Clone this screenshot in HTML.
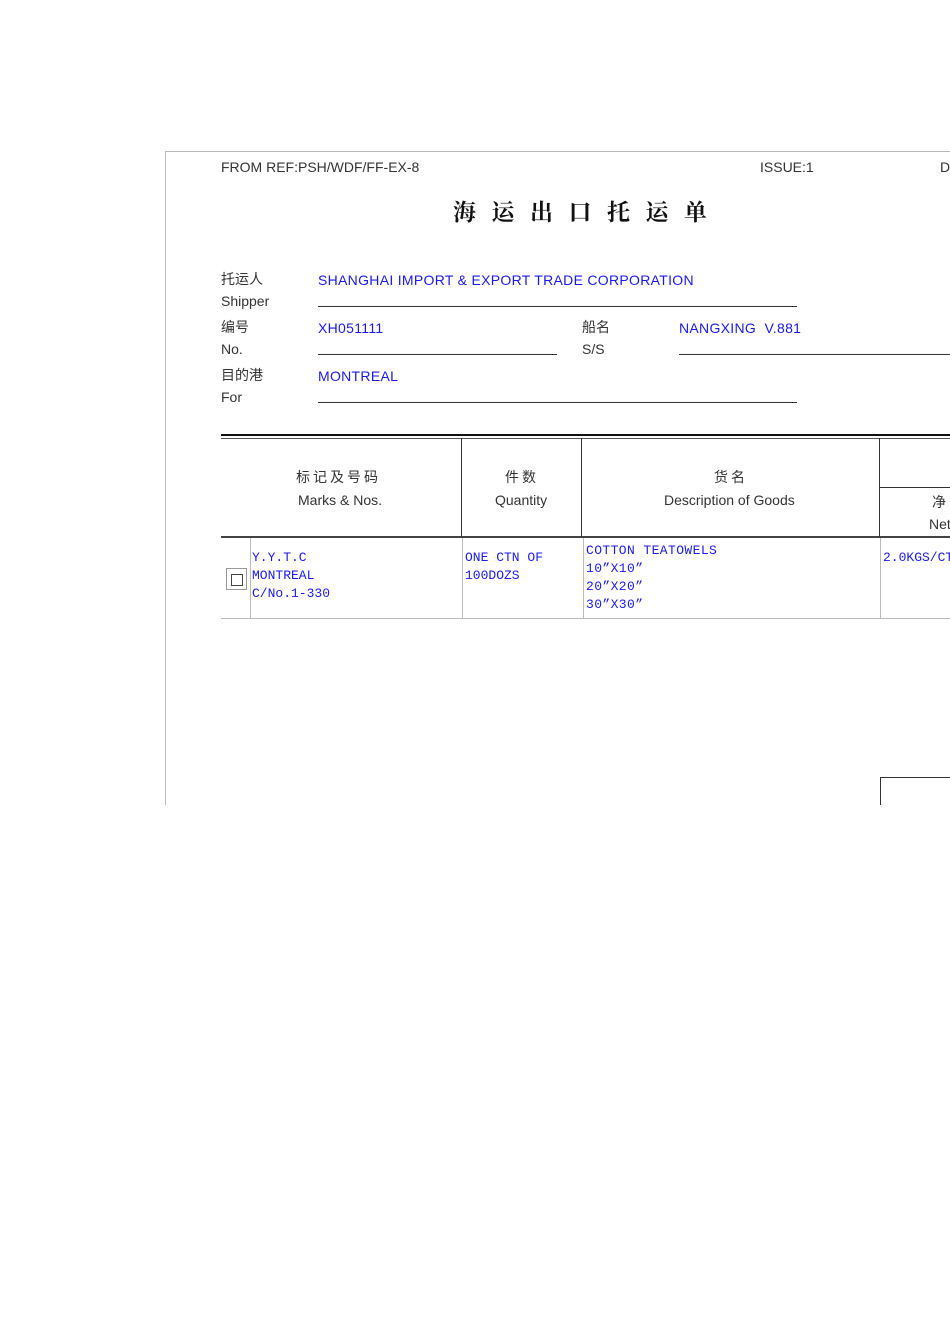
<!DOCTYPE html><html><head><meta charset="utf-8"><style>
body{margin:0;width:950px;height:1344px;background:#fff;position:relative;overflow:hidden;font-family:"Liberation Sans","Noto Sans CJK SC",sans-serif;font-size:14px;color:#333}
.a{position:absolute;white-space:nowrap}
.b{color:#1a1aee;letter-spacing:0.3px}
.m{font-family:"Liberation Mono","Noto Sans CJK SC",monospace;font-size:13px;color:#1a1aee;line-height:18px;letter-spacing:0}
.l{position:absolute;background:#333}
</style></head><body>
<div class="l" style="left:165px;top:151px;width:785px;height:1px;background:#bbb"></div>
<div class="l" style="left:165px;top:151px;width:1px;height:654px;background:#bbb"></div>
<div class="a" style="left:221px;top:159px">FROM REF:PSH/WDF/FF-EX-8</div>
<div class="a" style="left:760px;top:159px">ISSUE:1</div>
<div class="a" style="left:940px;top:159px">D</div>
<div class="a" style="left:453px;top:194px;font-family:'Noto Serif CJK SC',serif;font-size:23px;font-weight:bold;letter-spacing:15.5px;color:#111">海运出口托运单</div>
<div class="a" style="left:221px;top:269px">托运人</div>
<div class="a" style="left:221px;top:293px">Shipper</div>
<div class="a b" style="left:318px;top:272px">SHANGHAI IMPORT &amp; EXPORT TRADE CORPORATION</div>
<div class="l" style="left:318px;top:306px;width:479px;height:1px"></div>
<div class="a" style="left:221px;top:317px">编号</div>
<div class="a" style="left:221px;top:341px">No.</div>
<div class="a b" style="left:318px;top:320px">XH051111</div>
<div class="l" style="left:318px;top:354px;width:239px;height:1px"></div>
<div class="a" style="left:582px;top:317px">船名</div>
<div class="a" style="left:582px;top:341px">S/S</div>
<div class="a b" style="left:679px;top:320px">NANGXING&nbsp; V.881</div>
<div class="l" style="left:679px;top:354px;width:271px;height:1px"></div>
<div class="a" style="left:221px;top:365px">目的港</div>
<div class="a" style="left:221px;top:389px">For</div>
<div class="a b" style="left:318px;top:368px">MONTREAL</div>
<div class="l" style="left:318px;top:402px;width:479px;height:1px"></div>
<div class="l" style="left:221px;top:434px;width:729px;height:2px;background:#111"></div>
<div class="l" style="left:221px;top:438px;width:729px;height:1px;background:#555"></div>
<div class="l" style="left:221px;top:536px;width:729px;height:2px;background:#444"></div>
<div class="l" style="left:461px;top:438px;width:1px;height:99px"></div>
<div class="l" style="left:581px;top:438px;width:1px;height:99px"></div>
<div class="l" style="left:879px;top:438px;width:1px;height:99px"></div>
<div class="l" style="left:879px;top:487px;width:71px;height:1px"></div>
<div class="a" style="left:296px;top:467px;letter-spacing:3px">标记及号码</div>
<div class="a" style="left:298px;top:492px">Marks &amp; Nos.</div>
<div class="a" style="left:505px;top:467px;letter-spacing:3px">件数</div>
<div class="a" style="left:495px;top:492px">Quantity</div>
<div class="a" style="left:714px;top:467px;letter-spacing:3px">货名</div>
<div class="a" style="left:664px;top:492px">Description of Goods</div>
<div class="a" style="left:932px;top:492px">净</div>
<div class="a" style="left:929px;top:516px">Net</div>
<div class="l" style="left:250px;top:538px;width:1px;height:80px;background:#bbb"></div>
<div class="l" style="left:462px;top:538px;width:1px;height:80px;background:#bbb"></div>
<div class="l" style="left:583px;top:538px;width:1px;height:80px;background:#bbb"></div>
<div class="l" style="left:880px;top:538px;width:1px;height:80px;background:#bbb"></div>
<div class="l" style="left:221px;top:618px;width:729px;height:1px;background:#bbb"></div>
<div class="a" style="left:226px;top:568px;width:19px;height:20px;border:1px solid #999"><div style="position:absolute;left:4px;top:5px;width:10px;height:10px;border:1px solid #444"></div></div>
<div class="a m" style="left:252px;top:549px">Y.Y.T.C<br>MONTREAL<br>C/No.1-330</div>
<div class="a m" style="left:465px;top:549px">ONE CTN OF<br>100DOZS</div>
<div class="a m" style="left:586px;top:542px;letter-spacing:0.4px">COTTON TEATOWELS<br>10”X10”<br>20”X20”<br>30”X30”</div>
<div class="a m" style="left:883px;top:549px">2.0KGS/CT</div>
<div class="l" style="left:880px;top:777px;width:70px;height:1px"></div>
<div class="l" style="left:880px;top:777px;width:1px;height:28px"></div>
</body></html>
